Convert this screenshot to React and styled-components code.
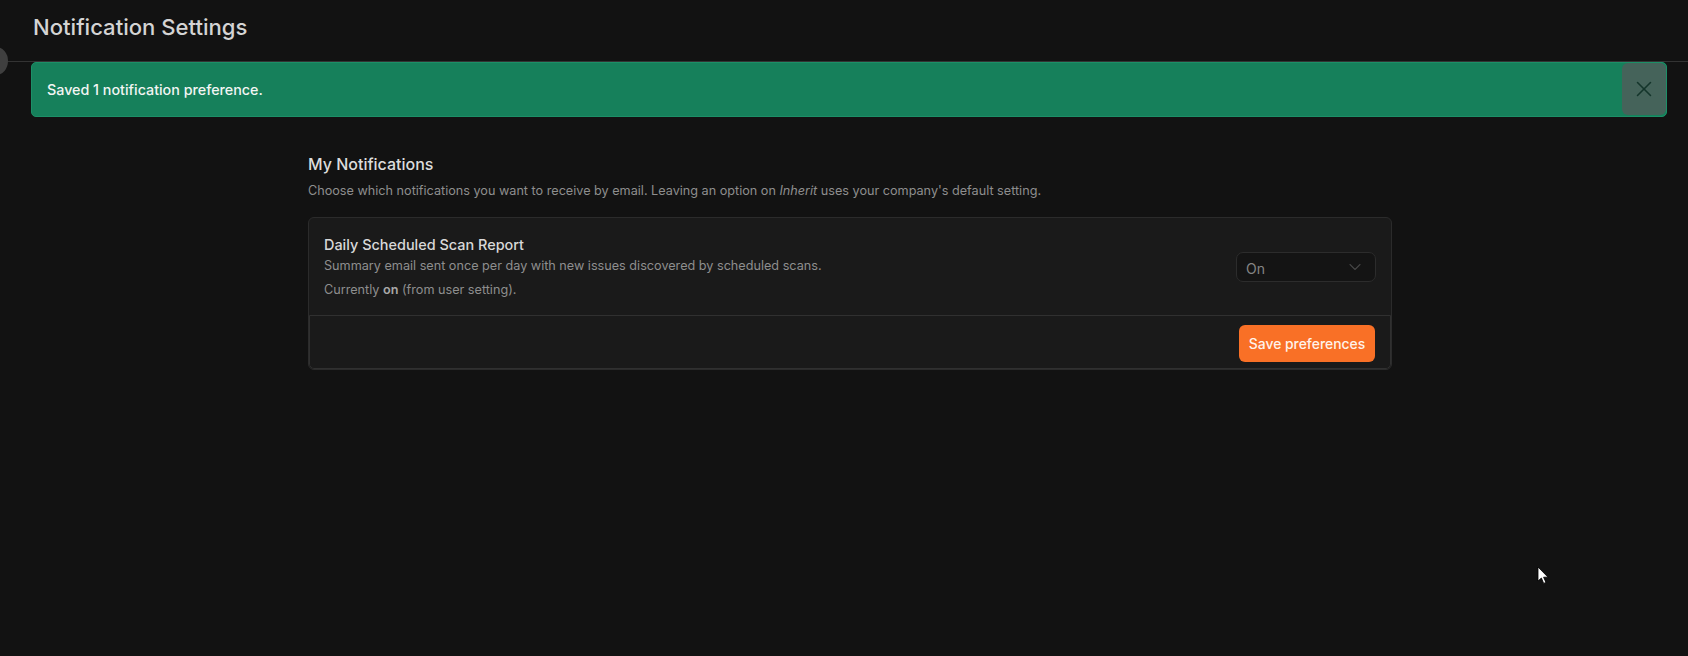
import React from 'react';
import styled, { createGlobalStyle } from 'styled-components';
import { X, ChevronDown } from 'lucide-react';

const GlobalStyle = createGlobalStyle`
  html, body, #root { margin: 0; padding: 0; height: 100%; }
  body {
    background: #121212;
    font-family: Inter, "Liberation Sans", sans-serif;
    overflow: hidden;
  }
`;

const Page = styled.div`
  position: relative;
  height: 656px;
  background: #121212;
`;

const Header = styled.header`
  height: 62px;
  box-sizing: border-box;
  padding: 14px 0 0 33px;
  border-bottom: 1px solid #333333;
`;

const Title = styled.h1`
  margin: 0;
  font-size: 22.1px;
  line-height: 27px;
  font-weight: 500;
  color: #d4d4d4;
`;

const SidebarHandle = styled.div`
  position: absolute;
  left: -16px;
  top: 47px;
  width: 24px;
  height: 28px;
  border-radius: 50%;
  background: #3f3f3f;
`;

const Alert = styled.div`
  display: flex;
  align-items: stretch;
  justify-content: space-between;
  height: 55px;
  box-sizing: border-box;
  margin: 0 21px 0 31px;
  padding: 0 0 1px 0;
  background: #16805b;
  border: 1px solid #1c8f67;
  border-radius: 5px;
`;

const AlertText = styled.span`
  align-self: center;
  padding-left: 15px;
  font-size: 14.3px;
  font-weight: 500;
  color: #f2f5f3;
`;

const CloseButton = styled.button`
  display: flex;
  align-items: center;
  justify-content: center;
  width: 44px;
  padding: 0;
  border: none;
  border-radius: 6px;
  background: #45635a;
  color: #14352b;
`;

const Section = styled.section`
  width: 1084px;
  margin: 36px 0 0 308px;
`;

const SectionTitle = styled.h2`
  margin: 0;
  font-size: 16px;
  line-height: 22px;
  font-weight: 500;
  color: #dcdcdc;
`;

const SectionHint = styled.p`
  margin: 6px 0 0;
  font-size: 12.65px;
  line-height: 20px;
  color: #8e8e8e;
`;

const Card = styled.div`
  margin-top: 16px;
  border: 1px solid #2b2b2b;
  border-radius: 6px;
  background: #1a1a1a;
  overflow: hidden;
`;

const Row = styled.div`
  display: flex;
  align-items: center;
  justify-content: space-between;
  height: 97px;
  box-sizing: border-box;
  padding: 0 15px;
`;

const RowName = styled.div`
  font-size: 14.45px;
  line-height: 20px;
  font-weight: 500;
  color: #d8d8d8;
`;

const RowText = styled.div`
  margin-top: ${p => p.$gap || 0}px;
  font-size: 12.65px;
  line-height: 19px;
  color: #8e8e8e;

  b {
    font-weight: 600;
    color: #a8a8a8;
  }
`;

const Select = styled.div`
  display: flex;
  align-items: center;
  justify-content: space-between;
  width: 140px;
  height: 30px;
  box-sizing: border-box;
  padding: 0 10px 0 9px;
  border: 1px solid #2c2c2c;
  border-radius: 7px;
  background: #141414;
  font-size: 14px;
  color: #858585;

  span {
    margin-top: 4px;
  }

  svg {
    color: #454545;
  }
`;

const Footer = styled.div`
  display: flex;
  justify-content: flex-end;
  height: 54px;
  box-sizing: border-box;
  padding: 9px 15px 0;
  border: 1px solid #303030;
  border-radius: 0 0 5px 5px;
`;

const SaveButton = styled.button`
  width: 136px;
  height: 37px;
  padding: 0;
  border: none;
  border-radius: 6px;
  background: #f97026;
  font-family: inherit;
  font-size: 13.9px;
  font-weight: 500;
  color: #fff3ea;
`;

const Cursor = styled.svg`
  position: absolute;
  left: 1537px;
  top: 566px;
`;

const App = () => {
  return (
    <Page>
      <GlobalStyle />
      <Header>
        <Title>Notification Settings</Title>
      </Header>
      <SidebarHandle />
      <Alert>
        <AlertText>Saved 1 notification preference.</AlertText>
        <CloseButton>
          <X size={26} strokeWidth={1.4} />
        </CloseButton>
      </Alert>
      <Section>
        <SectionTitle>My Notifications</SectionTitle>
        <SectionHint>
          Choose which notifications you want to receive by email. Leaving an option on <i>Inherit</i> uses your company's default setting.
        </SectionHint>
        <Card>
          <Row>
            <div>
              <RowName>Daily Scheduled Scan Report</RowName>
              <RowText $gap={1}>Summary email sent once per day with new issues discovered by scheduled scans.</RowText>
              <RowText $gap={5}>Currently <b>on</b> (from user setting).</RowText>
            </div>
            <Select>
              <span>On</span>
              <ChevronDown size={20} strokeWidth={1.3} />
            </Select>
          </Row>
          <Footer>
            <SaveButton>Save preferences</SaveButton>
          </Footer>
        </Card>
      </Section>
      <Cursor width="12" height="19" viewBox="0 0 12 19">
        <path d="M1 1v14l3.4-3 2.3 5.4 2.2-1-2.3-5.2H11z" fill="#fff" stroke="#000" strokeWidth="0.8" />
      </Cursor>
    </Page>
  );
};

export default App;
